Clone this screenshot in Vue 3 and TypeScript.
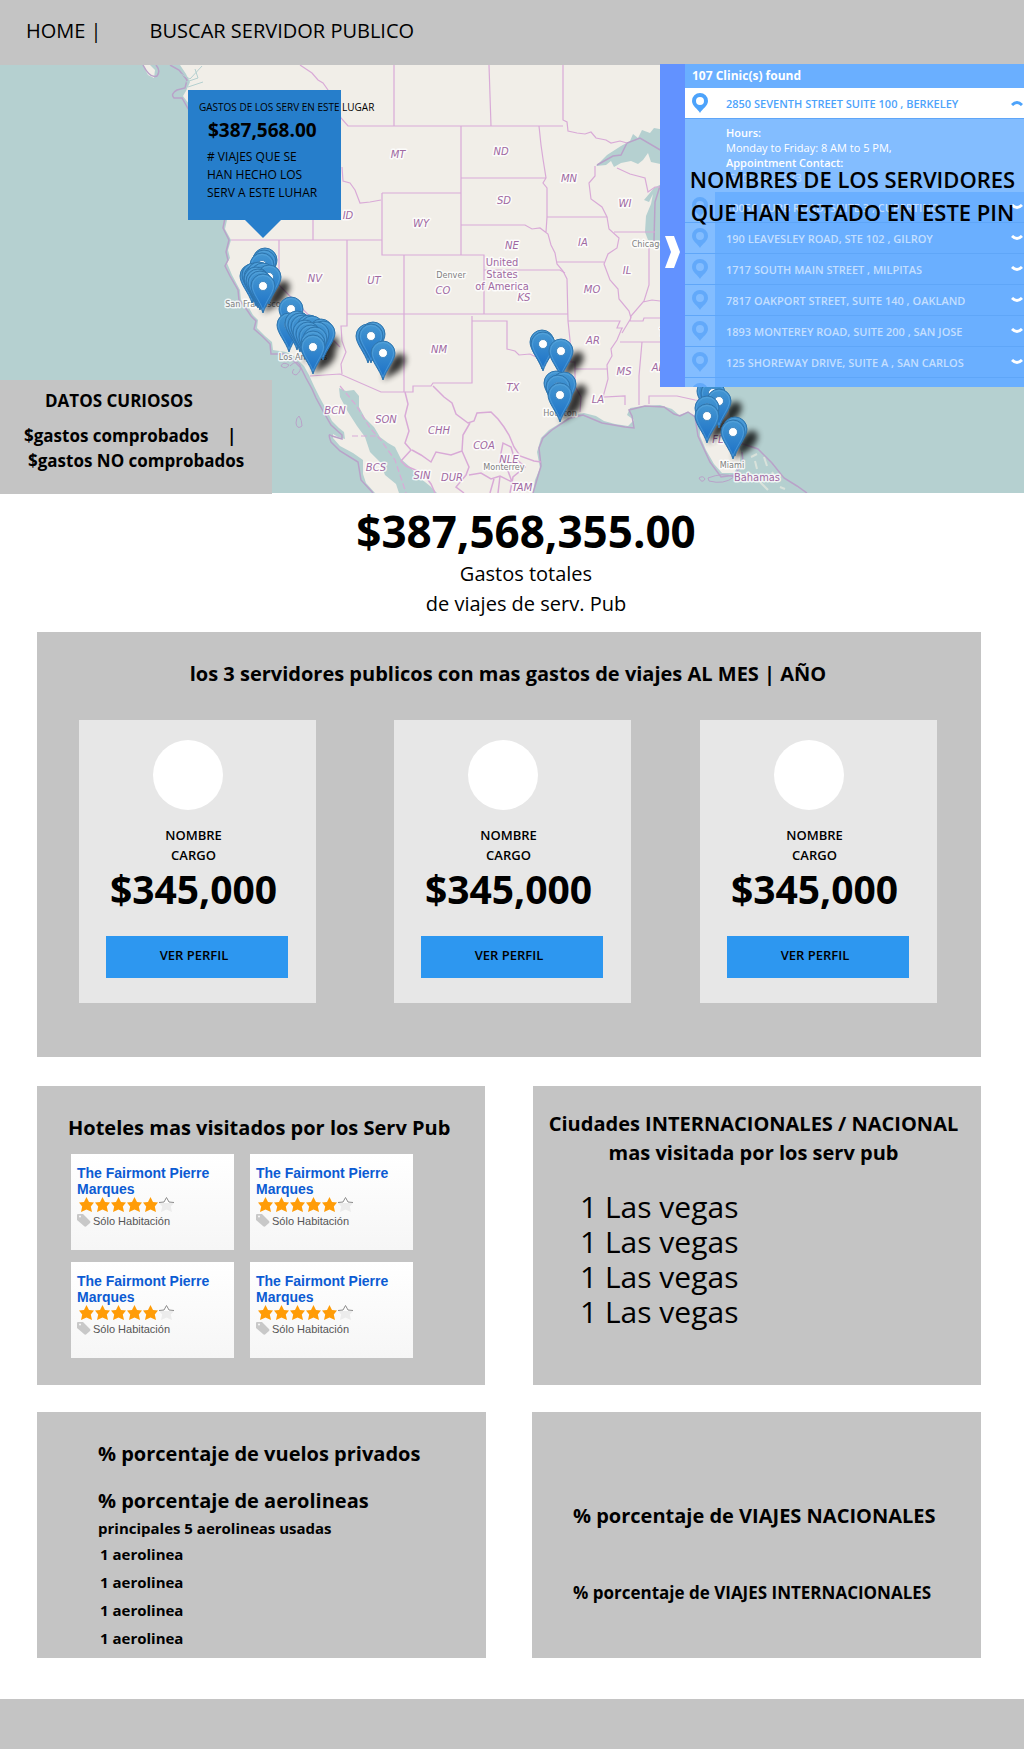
<script setup lang="ts">
interface Point {
  x: number
  y: number
}
interface Label extends Point {
  text: string
}

const states: Label[] = [
  { text: 'MT', x: 398, y: 158 }, { text: 'ID', x: 348, y: 219 }, { text: 'WY', x: 421, y: 227 },
  { text: 'ND', x: 501, y: 155 }, { text: 'SD', x: 504, y: 204 }, { text: 'MN', x: 569, y: 182 },
  { text: 'WI', x: 625, y: 207 }, { text: 'NE', x: 512, y: 249 }, { text: 'IA', x: 583, y: 246 },
  { text: 'IL', x: 627, y: 274 }, { text: 'MO', x: 592, y: 293 }, { text: 'CO', x: 443, y: 294 },
  { text: 'KS', x: 524, y: 301 }, { text: 'NV', x: 315, y: 282 }, { text: 'UT', x: 374, y: 284 },
  { text: 'NM', x: 439, y: 353 }, { text: 'AR', x: 593, y: 344 }, { text: 'TX', x: 513, y: 391 },
  { text: 'LA', x: 598, y: 403 }, { text: 'MS', x: 624, y: 375 }, { text: 'AL', x: 658, y: 371 },
  { text: 'TN', x: 666, y: 336 }, { text: 'BCN', x: 335, y: 414 }, { text: 'SON', x: 386, y: 423 },
  { text: 'BCS', x: 376, y: 471 }, { text: 'CHH', x: 439, y: 434 }, { text: 'COA', x: 484, y: 449 },
  { text: 'NLE', x: 509, y: 463 }, { text: 'SIN', x: 422, y: 479 }, { text: 'DUR', x: 452, y: 481 },
  { text: 'TAM', x: 522, y: 491 }, { text: 'FL', x: 718, y: 443 },
]

const cities: Label[] = [
  { text: 'Denver', x: 451, y: 278 }, { text: 'Chicago', x: 648, y: 247 },
  { text: 'San Francisco', x: 253, y: 307 }, { text: 'Los Angeles', x: 303, y: 360 },
  { text: 'Monterrey', x: 504, y: 470 }, { text: 'Houston', x: 560, y: 416 },
  { text: 'Miami', x: 732, y: 468 },
]

const regions: Label[] = [
  { text: 'United', x: 502, y: 266 }, { text: 'States', x: 502, y: 278 },
  { text: 'of America', x: 502, y: 290 }, { text: 'Bahamas', x: 757, y: 481 },
]

const toPoints = (list: number[][]): Point[] => list.map(([x, y]) => ({ x, y }))

const shadows = toPoints([
  [267, 280], [263, 286], [303, 335], [316, 336], [313, 347], [383, 353], [561, 351],
  [564, 384], [560, 395], [719, 401], [707, 416], [735, 430], [733, 432],
])

const pins = toPoints([
  [265, 260], [264, 262], [262, 265], [252, 276], [254, 275], [256, 277], [259, 274], [263, 275],
  [269, 277], [256, 279], [258, 281], [260, 283], [263, 286],
  [291, 309], [289, 325], [297, 323], [300, 325], [303, 327], [309, 327], [312, 328], [321, 331],
  [323, 333], [317, 334], [305, 332], [308, 334], [311, 337], [315, 339], [313, 343], [313, 347],
  [373, 334], [368, 336], [371, 336], [383, 353],
  [542, 342], [543, 344], [561, 351],
  [556, 383], [564, 384], [558, 387], [560, 395],
  [709, 391], [713, 393], [719, 401], [707, 408], [707, 416], [735, 429], [733, 432],
])

const clinics: string[] = [
  '10050 BUBB ROAD, SUITE 3 , CUPERTINO',
  '190 LEAVESLEY ROAD, STE 102 , GILROY',
  '1717 SOUTH MAIN STREET , MILPITAS',
  '7817 OAKPORT STREET, SUITE 140 , OAKLAND',
  '1893 MONTEREY ROAD, SUITE 200 , SAN JOSE',
  '125 SHOREWAY DRIVE, SUITE A , SAN CARLOS',
  '',
]

const officials = Array.from({ length: 3 }, () => ({
  name: 'NOMBRE',
  role: 'CARGO',
  amount: '$345,000',
}))
const hotels = Array.from({ length: 4 }, () => ({
  name: 'The Fairmont Pierre Marques',
  board: 'Sólo Habitación',
}))
const cityRanking: string[] = Array(4).fill('1 Las vegas')
const airlines: string[] = Array(4).fill('1 aerolinea')

const starPath = 'M7.500 0L10 5L15 5.500L11.800 9.500L13 15L7.500 12.500L2 15L3.200 9.500L0 5.500L5 5Z'
</script>

<template>
  <div class="page">
    <header class="topbar">
      <nav>
        <span><a href="#">HOME</a> |</span>
        <a href="#buscar">BUSCAR SERVIDOR PUBLICO</a>
      </nav>
    </header>

    <section class="map" aria-label="Mapa de viajes">
      <svg class="canvas" viewBox="0 65 1024 428" preserveAspectRatio="xMidYMid slice">
        <defs>
          <linearGradient id="pinFill" x1="0" y1="0" x2="0" y2="1">
            <stop offset="0" stop-color="#4597d2" />
            <stop offset="1" stop-color="#1a6fc6" />
          </linearGradient>
          <filter id="soft" x="-50%" y="-50%" width="200%" height="200%">
            <feGaussianBlur stdDeviation="3" />
          </filter>
          <g id="pin">
            <path d="M0 27C-3 17-12 8-12 0A12 12 0 0 1 12 0C12 8 3 17 0 27Z" fill="url(#pinFill)" stroke="#2f75ad" stroke-width="1" />
            <path d="M0 24C-3 15-10.500 7-10.500 0A10.500 10.500 0 0 1 10.500 0C10.500 7 3 15 0 24Z" fill="none" stroke="#69b1e4" stroke-opacity=".45" />
            <circle r="4.500" fill="#fff" stroke="#2d79b6" stroke-width=".8" />
          </g>
        </defs>

        <rect y="65" width="1024" height="428" fill="#b5d0d0" />
        <g fill="#f1eee8">
          <path d="M180 65L186 74L190 82L186 91L183 96L192 108L205 140L215 180L227 220L225 229L231 240L228 250L230 258L227 263L232 275L240 290L241 300L249 308L253 315L258 320L257 328L265 336L272 342L273 350L286 352L294 356L304 366L309 375L314 386L320 398L326 409L332 421L339 428L344 432L345 439L338 437L333 434L333 438L340 446L353 453L363 460L363 474L366 483L375 493L399 493L396 484L385 475L380 462L370 452L365 437L357 426L348 412L340 397L339 388L346 391L354 390L359 396L359 407L365 418L374 427L380 437L388 443L395 447L401 459L410 467L420 478L430 486L437 493L533 493L535 480L540 468L537 452L541 438L549 430L562 422L572 415L584 413L596 416L604 421L615 424L628 426L634 420L627 415L630 408L643 406L660 405L672 409L679 415L688 412L695 416L700 423L700 436L706 450L714 464L722 473L734 473L740 462L741 451L733 435L729 410L724 387L724 65Z" />
          <path d="M143 65L148 75L154 78L155 70L150 65Z" />
        </g>
        <g fill="#b5d0d0">
          <path d="M596 166L607 155L621 146L630 141L633 134L638 138L642 130L650 133L654 128L665 130L665 165L651 162L648 153L643 160L638 164L631 161L621 163L614 167L611 161L606 165Z" />
          <path d="M665 182L654 188L644 200L649 202L653 194L651 204L646 216L645 232L648 240L665 241Z" />
        </g>
        <g fill="none" stroke="#b9a2c9" stroke-width="1">
          <path d="M143 65Q150 79 157 76Q161 71 156 65M170 65L179 70L187 80L185 88L177 90Q170 94 174 98L182 98L190 112M225 218L223 228L229 240L226 252L228 260L225 266L230 276L238 290L239 300L247 310L251 316L256 321L254 329L262 336L270 344L271 354L284 354L292 359L301 368L306 378L312 389L316 398L323 411L331 425L342 435L342 439L332 436Q327 432 331 442L340 451L358 462L361 480L373 493" stroke-width="1.500" />
          <path d="M533 493L541 466L539 448L543 438L552 430L570 418L583 415L602 423L625 427L634 428L632 416L629 410L645 406L664 407L674 414L680 416L688 412L695 417L698 436L710 462L721 477L735 475L743 461L742 452M740 443L758 449L772 463L784 478L797 486L807 493M597 165L613 156L621 155L627 143L640 138L662 151M660 186L655 202L654 241" stroke-width="1.500" />
          <path d="M281 366Q283 361 289 365Q286 370 281 366M290 366Q297 359 300 365Q302 371 296 375Q290 374 294 369M299 416Q302 420 302 426Q297 430 296 423Q296 418 299 416M699 478Q703 475 705 479Q702 484 699 478M708 478Q723 472 734 477Q724 485 709 481Z" />
        </g>
        <g fill="none" stroke="#d9aad7" stroke-width="1.200">
          <path d="M300 65L306 69L312 73L318 80L323 83L328 90L335 102L341 118L348 126H563M394 65V126M489 65L491 126M563 65V120L567 122L568 131L577 133L585 134L591 132L596 138L606 140L611 143L620 141L627 143" />
          <path d="M461 126V255M461 178H546M461 225H525L532 229L540 228L548 234L551 245L555 253L557 264L563 271L567 279L568 321M539 126L541 145L543 159L546 178L543 183L547 188V217L546 232M547 217H607L602 207L591 199L589 183L595 176V166M607 217L609 229L619 238L617 248L608 254L604 264L610 280L618 289L619 299L629 311L631 318M556 262H604M614 232H655M617 168L630 174L645 178L648 192L655 187H665" />
          <path d="M342 167L343 181L350 183L355 190L360 203L370 202L381 200M382 193H461M382 193V255H484V314M404 255V392M231 240H382M313 220V240M279 240V285L340 347M347 240V314H568M484 270H560L565 273M347 314V326H341L342 341L346 352L341 364L342 374M310 376L340 374L381 392H413V386H431L433 383H472V316M472 321H507V349L515 351L519 355L530 354L538 358L555 357L567 362H575V386L581 397L580 412" />
          <path d="M568 321H620L617 328L623 328M568 321L570 340L571 362M575 369H608M620 342H665M622 328L617 340L611 349L612 356L607 365L608 379L603 397L625 396V405M631 318L622 333M642 342L639 376L639 405M649 404V396H677L695 400L724 402M649 244V285L644 301L631 316L630 321H643L644 318H665M643 302L652 300L660 301" />
          <path d="M433 386L444 397L452 403L456 414L468 423L474 421L477 413L491 412L498 419L504 427L509 435L514 447L520 456L534 461L541 462M405 392L408 404L405 416L409 431L405 443L411 450L401 461L406 466L423 473L431 484L435 493M412 450L421 455L431 462L436 452L451 455L462 451L463 435L470 423M462 451L469 467L466 475L456 487L464 493M469 475L481 473L491 479L500 476L512 482L508 471L499 463L503 443L511 447L514 457L525 467L513 477L510 493M500 476L498 493M494 479L490 493" stroke-width="1.500" />
          <path d="M340 386L356 405L370 428L380 439L395 460L406 493M352 436H378" stroke-dasharray="6 3" />
        </g>
        <path d="M181 74L190 79L202 66M186 82L198 78L195 69M188 87L203 82" fill="none" stroke="#b5d0d0" />
        <path d="M751 457L757 454M757 469L755 461M764 457L767 466M772 472L778 480M760 482L768 490M780 487L785 489" fill="none" stroke="#d9e2db" stroke-width="2" />

        <g text-anchor="middle" class="labels">
          <text v-for="s in states" :key="s.text" class="state" :x="s.x" :y="s.y">{{ s.text }}</text>
          <text v-for="c in cities" :key="c.text" class="city" :x="c.x" :y="c.y">{{ c.text }}</text>
          <text v-for="r in regions" :key="r.text" class="region" :x="r.x" :y="r.y">{{ r.text }}</text>
        </g>

        <g filter="url(#soft)" opacity=".8">
          <path v-for="(s, i) in shadows" :key="i" d="M0 27L8 8Q14-2 21 2Q26 8 16 18Z" :transform="`translate(${s.x} ${s.y})`" />
        </g>
        <use v-for="(p, i) in pins" :key="i" href="#pin" :x="p.x" :y="p.y" />
      </svg>

      <div class="popup">
        <p class="popup-title">GASTOS DE LOS SERV EN ESTE LUGAR</p>
        <p class="popup-amount">$387,568.00</p>
        <p class="popup-note"># VIAJES QUE SE<br />HAN HECHO LOS<br />SERV A ESTE LUHAR</p>
      </div>

      <aside class="facts">
        <h2>DATOS CURIOSOS</h2>
        <p>$gastos comprobados <span>|</span></p>
        <p class="indent">$gastos NO comprobados</p>
      </aside>

      <aside class="clinics">
        <button class="toggle" type="button" aria-label="Ocultar lista">
          <svg width="15" height="32" viewBox="0 0 15 32"><path d="M0 0H9L15 16L9 32H0L6 16Z" fill="#fff" /></svg>
        </button>
        <div class="list">
          <p class="count">107 Clinic(s) found</p>
          <button class="row active" type="button">
            <span class="marker">
              <svg width="16" height="20" viewBox="0 0 16 20"><path fill-rule="evenodd" d="M8 20C6 16 0 13 0 8A8 8 0 0 1 16 8C16 13 10 16 8 20ZM8 4A4 4 0 1 0 8 12A4 4 0 1 0 8 4Z" /></svg>
            </span>
            <span class="address">2850 SEVENTH STREET SUITE 100 , BERKELEY</span>
            <svg class="chevron" width="12" height="6" viewBox="0 0 12 6"><path d="M1 5Q6 0 11 5" fill="none" stroke="currentColor" stroke-width="3" /></svg>
          </button>
          <div class="detail">
            <b>Hours:</b><br />Monday to Friday: 8 AM to 5 PM,<br /><b>Appointment Contact:</b><br />
            <span class="phone">(510) 841-5573</span>
          </div>
          <button v-for="(c, i) in clinics" :key="i" class="row" type="button">
            <span class="marker">
              <svg width="16" height="20" viewBox="0 0 16 20"><path fill-rule="evenodd" d="M8 20C6 16 0 13 0 8A8 8 0 0 1 16 8C16 13 10 16 8 20ZM8 4A4 4 0 1 0 8 12A4 4 0 1 0 8 4Z" /></svg>
            </span>
            <span class="address">{{ c }}</span>
            <svg class="chevron" width="12" height="6" viewBox="0 0 12 6"><path d="M1 1Q6 6 11 1" fill="none" stroke="currentColor" stroke-width="3" /></svg>
          </button>
        </div>
        <p class="overlay">NOMBRES DE LOS SERVIDORES<br />QUE HAN ESTADO EN ESTE PIN</p>
      </aside>
    </section>

    <section class="total">
      <p class="total-amount">$387,568,355.00</p>
      <p>Gastos totales</p>
      <p>de viajes de serv. Pub</p>
    </section>

    <main>
      <section class="panel top">
        <h2>los 3 servidores publicos con mas gastos de viajes AL MES | AÑO</h2>
        <div class="cards">
          <article v-for="(o, i) in officials" :key="i" class="card">
            <div class="avatar"></div>
            <p class="who">{{ o.name }}</p>
            <p class="who">{{ o.role }}</p>
            <p class="price">{{ o.amount }}</p>
            <button type="button">VER PERFIL</button>
          </article>
        </div>
      </section>

      <div class="pair">
        <section class="panel hotels">
          <h2>Hoteles mas visitados por los Serv Pub</h2>
          <div class="hotel-grid">
            <article v-for="(h, i) in hotels" :key="i" class="hotel">
              <a href="#hotel">{{ h.name }}</a>
              <svg class="stars" width="98" height="16" viewBox="0 0 98 16" role="img" aria-label="5 de 6 estrellas">
                <path v-for="n in 5" :key="n" :d="starPath" fill="#ff9c07" :transform="`translate(${(n - 1) * 16 + 2} 0)`" />
                <path d="M82 0m2 15l1.200-5.500L82 6H97l-3.200 3.500L95 15l-5.500-2.500Z" fill="#ececec" />
                <path d="M82 5.500L87 5L89.500 .5L92 5L97 5.500" fill="#fff" stroke="#8c8c8c" />
              </svg>
              <p>
                <svg width="14" height="14" viewBox="0 0 14 14"><path fill-rule="evenodd" d="M0 2Q0 1 1 1L6 1L13 8Q14 9 13 10L9 13.500Q8 14 7 13L0 7ZM3 2.500A1 1 0 1 0 3 4.500A1 1 0 1 0 3 2.500Z" fill="#c8c8c8" /></svg>
                {{ h.board }}
              </p>
            </article>
          </div>
        </section>

        <section class="panel cities">
          <h2>Ciudades INTERNACIONALES / NACIONAL<br />mas visitada por los serv pub</h2>
          <ul>
            <li v-for="(c, i) in cityRanking" :key="i">{{ c }}</li>
          </ul>
        </section>
      </div>

      <div class="pair lower">
        <section class="panel airlines">
          <h2>% porcentaje de vuelos privados</h2>
          <h2>% porcentaje de aerolineas</h2>
          <h3>principales 5 aerolineas usadas</h3>
          <ul>
            <li v-for="(a, i) in airlines" :key="i">{{ a }}</li>
          </ul>
        </section>
        <section class="panel trips">
          <h2>% porcentaje de VIAJES NACIONALES</h2>
          <h3>% porcentaje de VIAJES INTERNACIONALES</h3>
        </section>
      </div>
    </main>

    <footer></footer>
  </div>
</template>

<style>
body {
  margin: 0;
  background: #fff;
}
</style>

<style scoped>
.page {
  color: #000;
  font-family: "Open Sans", sans-serif;
}
.page * {
  box-sizing: border-box;
}
h2, h3, p, ul {
  margin: 0;
  padding: 0;
  list-style: none;
}
h2, h3 {
  font-size: 20px;
  line-height: 30px;
  font-weight: 700;
}
a {
  color: inherit;
  text-decoration: none;
}
button {
  border: 0;
  padding: 0;
  font-family: inherit;
}

.topbar {
  padding: 1px 26px 4px;
  background: #c4c4c4;
}
.topbar nav {
  display: flex;
  gap: 48px;
  font-size: 20px;
  line-height: 60px;
}

.map {
  position: relative;
  height: 428px;
}
.canvas {
  display: block;
  width: 100%;
  height: 100%;
}
.labels {
  font-family: "DejaVu Sans", sans-serif;
  paint-order: stroke;
  stroke: #fff;
  stroke-opacity: .8;
  stroke-width: 3px;
  stroke-linejoin: round;
}
.state {
  font-size: 10px;
  font-style: italic;
  fill: #a069a2;
}
.city {
  font-family: "DejaVu Sans Condensed", "DejaVu Sans", sans-serif;
  font-size: 9px;
  fill: #808080;
}
.region {
  font-family: "DejaVu Sans Condensed", "DejaVu Sans", sans-serif;
  font-size: 11px;
  fill: #a069a2;
}

.popup {
  position: absolute;
  top: 25px;
  left: 188px;
  width: 153px;
  height: 130px;
  padding: 10px 11px 0;
  background: #267ecb;
  white-space: nowrap;
}
.popup::after {
  content: "";
  position: absolute;
  top: 100%;
  left: 57px;
  border: 18px solid transparent;
  border-top-color: #267ecb;
  border-bottom: 0;
}
.popup-title {
  font-size: 10px;
  line-height: 14px;
}
.popup-amount {
  margin: 4px 0 6px 9px;
  font-size: 19px;
  line-height: 24px;
  font-weight: 700;
}
.popup-note {
  margin-left: 8px;
  font-size: 12px;
  line-height: 18px;
}

.facts {
  position: absolute;
  bottom: -1px;
  left: 0;
  width: 272px;
  height: 114px;
  padding: 8px 24px;
  background: #c4c4c4;
  font-size: 17px;
  line-height: 25px;
  font-weight: 700;
}
.facts h2 {
  margin: 0 0 10px 21px;
  font-size: 17px;
  line-height: 25px;
}
.facts span {
  margin-left: 14px;
}
.facts .indent {
  margin-left: 4px;
}

.clinics {
  position: absolute;
  top: -1px;
  right: 0;
  display: flex;
  width: 364px;
  height: 323px;
  overflow: hidden;
}
.toggle {
  display: flex;
  align-items: center;
  justify-content: center;
  width: 25px;
  padding-top: 52px;
  background: #6292ff;
}
.list {
  flex: 1;
  background: #6aafff;
  color: #fff;
  font-size: 11px;
}
.count {
  padding-left: 7px;
  font-size: 12px;
  line-height: 24px;
  font-weight: 700;
}
.row {
  display: flex;
  align-items: center;
  width: 100%;
  height: 31px;
  border-bottom: 1px solid #5fa6f8;
  background: #6aafff;
  color: #fff;
  font-size: 11px;
  font-weight: 600;
  text-align: left;
}
.marker {
  display: flex;
  align-items: center;
  justify-content: center;
  width: 30px;
  height: 100%;
  background: #83bdff;
  fill: #62a9fa;
}
.address {
  flex: 1;
  padding-left: 11px;
  color: #c4dfff;
}
.chevron {
  margin-right: 1px;
}
.row.active,
.row.active .marker {
  background: #fff;
  fill: #4da3fb;
}
.row.active,
.row.active .address {
  color: #4da3fb;
}
.detail {
  height: 73px;
  padding: 6px 0 0 41px;
  background: #83bdff;
  line-height: 15px;
}
.detail b {
  font-weight: 600;
}
.phone {
  opacity: .5;
}
.overlay {
  position: absolute;
  top: 99px;
  right: 0;
  left: 21px;
  font-size: 22px;
  line-height: 33px;
  font-weight: 600;
  text-align: center;
  white-space: nowrap;
}

.total {
  padding: 10px 0 13px 28px;
  font-size: 20px;
  line-height: 30px;
  text-align: center;
}
.total-amount {
  font-size: 44px;
  line-height: 56px;
  font-weight: 700;
}

main {
  padding: 0 43px 41px 37px;
}
.panel {
  background: #c4c4c4;
}
.top {
  padding: 27px 44px 54px 42px;
}
.top h2 {
  text-align: center;
}
.cards {
  display: grid;
  grid-template-columns: 237fr 78fr 237fr 69fr 237fr;
  margin-top: 31px;
}
.card {
  grid-column: 1;
  grid-row: 1;
  padding: 20px 28px 25px 27px;
  background: #e7e7e7;
  text-align: center;
}
.card:nth-child(2) {
  grid-column: 3;
}
.card:nth-child(3) {
  grid-column: 5;
}
.card p {
  padding-right: 7px;
}
.card .avatar {
  width: 70px;
  height: 70px;
  margin: 0 auto 15px 47px;
  border-radius: 50%;
  background: #fff;
}
.who {
  font-size: 13px;
  line-height: 20px;
  font-weight: 600;
}
.price {
  margin-bottom: 23px;
  font-size: 39px;
  line-height: 48px;
  font-weight: 700;
}
.card button {
  display: block;
  width: 100%;
  height: 42px;
  padding: 0 6px 4px 0;
  background: #2d97f0;
  color: #000;
  font-size: 13px;
  font-weight: 600;
}

.pair {
  display: grid;
  grid-template-columns: 1fr 1fr;
  gap: 48px;
  margin-top: 29px;
}
.pair.lower {
  gap: 46px;
  margin-top: 27px;
}
.hotels {
  padding: 27px 31px;
}
.hotel-grid {
  display: grid;
  grid-template-columns: 163px 163px;
  gap: 12px 16px;
  margin: 11px 0 0 3px;
}
.hotel {
  height: 96px;
  padding: 11px 6px 0;
  background: linear-gradient(#fff, #f6f6f6);
  color: #555;
  font-family: "Liberation Sans", Arial, sans-serif;
  font-size: 11px;
  line-height: 16px;
}
.hotel a {
  display: block;
  color: #0c5bd3;
  font-size: 14px;
  font-weight: 700;
}
.hotel p {
  display: flex;
  gap: 2px;
}
.hotel svg {
  display: block;
}
.cities {
  padding: 23px 22px 0 15px;
}
.cities h2 {
  line-height: 29px;
  text-align: center;
  white-space: nowrap;
}
.cities ul {
  margin: 22px 0 0 32px;
  font-size: 30px;
  line-height: 35px;
}
.airlines {
  padding: 27px 61px 6px;
}
.airlines h2 + h2 {
  margin-top: 17px;
}
.airlines h3 {
  font-size: 15px;
  line-height: 24px;
}
.airlines ul {
  padding-left: 2px;
  font-size: 15px;
  line-height: 28px;
  font-weight: 700;
}
.trips {
  padding: 89px 41px 0;
}
.trips h3 {
  margin-top: 47px;
  font-size: 17px;
}

footer {
  height: 50px;
  background: #c4c4c4;
}
</style>
